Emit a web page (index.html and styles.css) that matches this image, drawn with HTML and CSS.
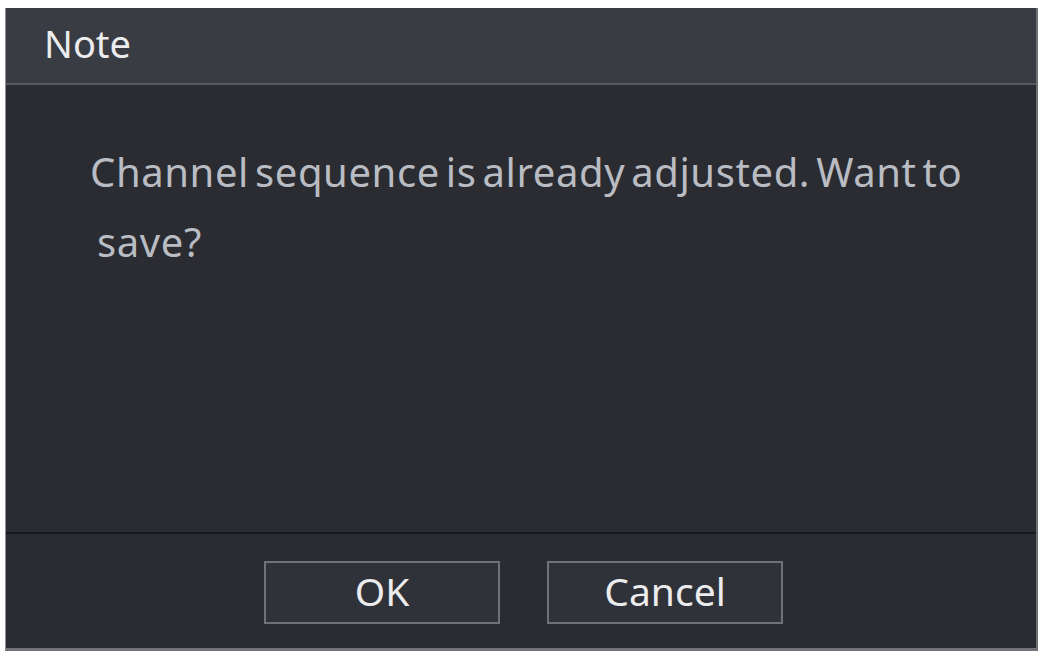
FILE: index.html
```html
<!DOCTYPE html>
<html>
<head>
<meta charset="utf-8">
<link rel="stylesheet" href="styles.css">
</head>
<body>
<div class="dialog">
  <div class="header"><span class="title">Note</span></div>
  <div class="content">
    <p class="message">Channel sequence is already adjusted. Want to<br><span class="indent">save?</span></p>
  </div>
  <div class="footer">
    <button class="btn">OK</button>
    <button class="btn">Cancel</button>
  </div>
</div>
</body>
</html>
```
FILE: styles.css
```css
html, body {
  margin: 0;
  padding: 0;
  background: #ffffff;
  width: 1042px;
  height: 651px;
  overflow: hidden;
}
body {
  font-family: "Noto Sans", "Open Sans", sans-serif;
}
.dialog {
  margin: 8px 0 0 5px;
  width: 1033px;
  height: 643px;
  box-sizing: border-box;
  border-left: 1px solid #8d9095;
  border-right: 2px solid #6d7075;
  border-bottom: 3px solid #707378;
  background: #2a2c32;
  display: flex;
  flex-direction: column;
}
.header {
  height: 75px;
  background: #3a3c43;
  border-bottom: 2px solid #55585e;
  display: flex;
  align-items: center;
  padding-left: 38px;
  flex-shrink: 0;
}
.title {
  color: #ececee;
  font-size: 38px;
  margin-top: -6px;
}
.content {
  flex: 1;
  padding: 0 0 0 84px;
}
.message {
  margin: 0;
  padding-top: 52px;
  color: #b9bcc3;
  font-size: 40px;
  line-height: 70px;
  letter-spacing: 0.6px;
  word-spacing: -5px;
  white-space: nowrap;
}
.indent {
  margin-left: 7px;
}
.footer {
  height: 116px;
  border-top: 2px solid #17181b;
  display: flex;
  justify-content: center;
  align-items: flex-start;
  gap: 47px;
  padding: 27px 0 0 5px;
  box-sizing: border-box;
  flex-shrink: 0;
}
.btn {
  width: 236px;
  height: 63px;
  background: #30323a;
  border: 2px solid #6f7277;
  color: #ececee;
  font-family: "Noto Sans", "Open Sans", sans-serif;
  font-size: 39px;
  padding: 0 0 4px 0;
  margin: 0;
}
```
